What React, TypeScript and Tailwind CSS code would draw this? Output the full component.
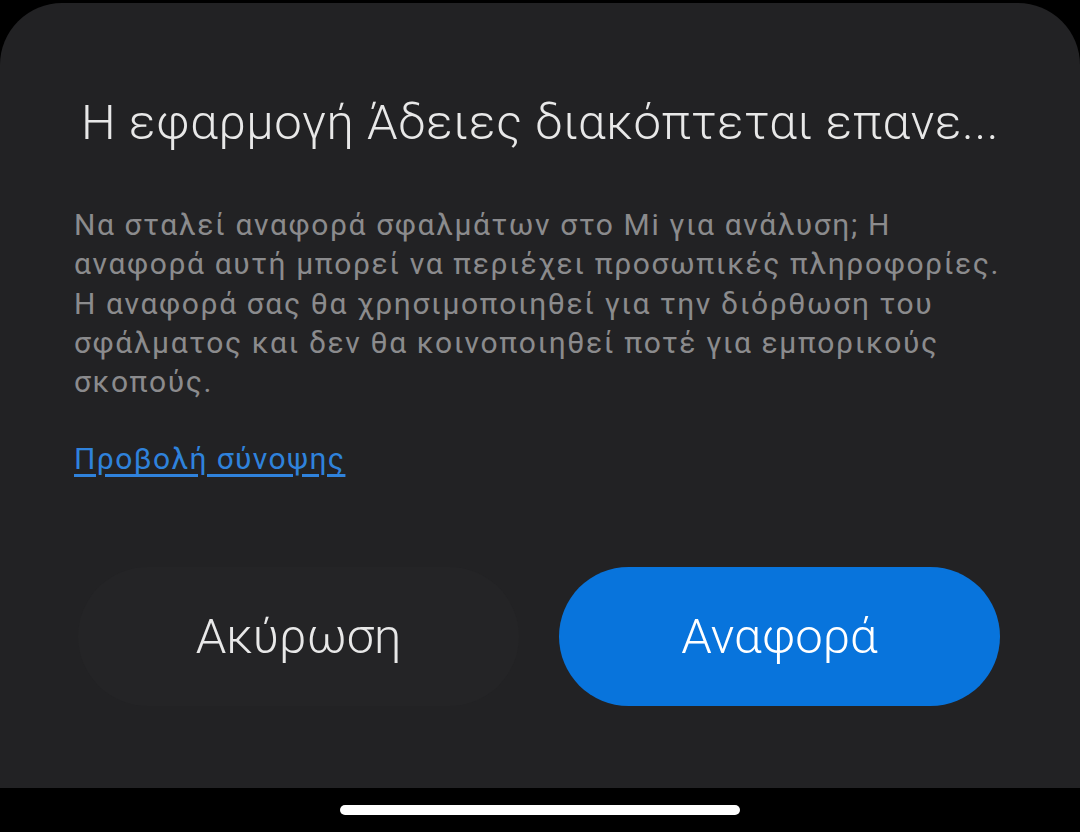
import React from "react";

const FONT = { fontFamily: "Roboto, 'Noto Sans', sans-serif" };

const BODY_LINES = [
  "Να σταλεί αναφορά σφαλμάτων στο Mi για ανάλυση; Η",
  "αναφορά αυτή μπορεί να περιέχει προσωπικές πληροφορίες.",
  "Η αναφορά σας θα χρησιμοποιηθεί για την διόρθωση του",
  "σφάλματος και δεν θα κοινοποιηθεί ποτέ για εμπορικούς",
  "σκοπούς.",
];

export default function App() {
  return (
    <div className="w-[1080px] h-[832px] bg-black flex flex-col overflow-hidden" style={FONT}>
      <div className="h-[3px] shrink-0" />

      {/* Dialog sheet */}
      <div className="flex-1 bg-[#222224] rounded-t-[62px] flex flex-col px-[74px]">
        <h1 className="mt-[92px] text-center text-[49px] leading-[56px] font-light text-[#e8e8e8] tracking-[0.6px] whitespace-nowrap">
          Η εφαρμογή Άδειες διακόπτεται επανε...
        </h1>

        <div className="mt-[54px] text-[30px] leading-[39.3px] text-[#8b8b8d] tracking-[1.6px] whitespace-nowrap">
          {BODY_LINES.map((l) => (
            <div key={l}>{l}</div>
          ))}
        </div>

        <div className="mt-[38px]">
          <span className="text-[30px] leading-[40px] tracking-[1.4px] text-[#2f82dc] underline underline-offset-[5px]">
            Προβολή σύνοψης
          </span>
        </div>

        <div className="mt-[88px] ml-[4px] mr-[6px] flex gap-[40px]">
          <button className="flex-1 h-[139px] rounded-full bg-[#242426] text-[49px] font-light text-[#e8e8e8]">
            Ακύρωση
          </button>
          <button className="flex-1 h-[139px] rounded-full bg-[#0874dc] text-[49px] font-light text-white">
            Αναφορά
          </button>
        </div>
      </div>

      {/* Navigation bar */}
      <div className="h-[44px] shrink-0 flex items-center justify-center">
        <div className="w-[400px] h-[10px] rounded-full bg-white" />
      </div>
    </div>
  );
}
